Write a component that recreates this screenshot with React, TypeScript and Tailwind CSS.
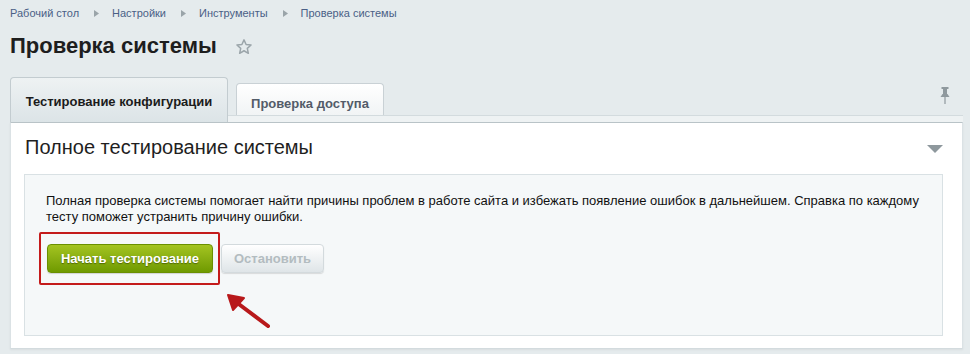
import React from "react";

const font = { fontFamily: '"Liberation Sans", Arial, sans-serif' };

function Crumb({ text, last }: { text: string; last?: boolean }) {
  return (
    <div className="flex items-center">
      <span className="text-[11px] leading-[16px] text-[#4a5f86]">{text}</span>
      {!last && (
        <svg width="5" height="7" viewBox="0 0 5 7" className="ml-[15px] mr-[13px]">
          <path d="M0 0 L5 3.5 L0 7 Z" fill="#9aa4a9" />
        </svg>
      )}
    </div>
  );
}

export default function App() {
  return (
    <div className="w-full h-[354px] bg-[#e5ebed] pl-[10px] pr-[7px] overflow-hidden" style={font}>
      <div className="flex items-center pt-[5px] h-[21px]">
        <Crumb text="Рабочий стол" />
        <Crumb text="Настройки" />
        <Crumb text="Инструменты" />
        <Crumb text="Проверка системы" last />
      </div>

      <div className="flex items-center mt-[12px] h-[26px]">
        <h1 className="text-[22px] leading-[26px] font-bold text-[#1e1e1e]">Проверка системы</h1>
        <svg width="18" height="18" viewBox="0 0 24 24" className="ml-[18px] mt-[2px]">
          <path
            d="M12 2.5 L14.8 8.6 L21.4 9.3 L16.4 13.8 L17.8 20.4 L12 17 L6.2 20.4 L7.6 13.8 L2.6 9.3 L9.2 8.6 Z"
            fill="none"
            stroke="#9ba5aa"
            strokeWidth="2"
            strokeLinejoin="round"
          />
        </svg>
      </div>

      <div className="mt-[18px] flex items-end">
        <div className="h-[45px] w-[218px] rounded-t-[4px] border border-b-0 border-[#c3ccd0] bg-gradient-to-b from-[#eef2f3] to-[#dce4e7] pt-[11px] text-center">
          <span className="text-[13px] leading-[16px] font-bold text-[#1b1b1b]">Тестирование конфигурации</span>
        </div>
        <div className="flex-1 flex flex-col">
          <div className="flex items-end justify-between">
            <div className="ml-[8px] h-[32px] w-[148px] rounded-t-[4px] border border-b-0 border-[#c9d1d5] bg-gradient-to-b from-[#ffffff] to-[#f1f4f5] pt-[7px] text-center">
              <span className="text-[13px] leading-[16px] font-bold text-[#535c69]">Проверка доступа</span>
            </div>
            <svg width="12" height="17" viewBox="0 0 12 17" className="mb-[11px] mr-[12px]">
              <rect x="2.5" y="0" width="7" height="2" fill="#8f999e" />
              <rect x="4" y="2" width="4" height="5" fill="#8f999e" />
              <path d="M1.5 10 L3.5 7 L8.5 7 L10.5 10 Z" fill="#8f999e" />
              <rect x="5.4" y="10" width="1.2" height="7" fill="#8f999e" />
            </svg>
          </div>
          <div className="h-[7px] border-t border-[#d3dbde] bg-[#eef2f3]" />
        </div>
      </div>

      <div className="border-t border-[#b9c3c7] bg-white border-x border-x-[#dbe2e5] border-b border-b-[#d3dbde] shadow-[0_1px_2px_rgba(0,0,0,0.06)] pl-[13px] pr-[19px] pt-[12px] pb-[12px]">
        <div className="flex items-center justify-between h-[24px]">
          <h2 className="pl-[1px] text-[20px] leading-[24px] text-[#1f1f1f]">Полное тестирование системы</h2>
          <svg width="16" height="8" viewBox="0 0 16 8" className="mt-[3px]">
            <path d="M0 0 L16 0 L8 8 Z" fill="#8e989d" />
          </svg>
        </div>

        <div className="relative mt-[15px] h-[162px] border border-[#d9e1e4] bg-[#f5f8f9] pl-[21px] pr-[22px] pt-[18px]">
          <p className="text-[13px] leading-[16px] text-[#111]">
            Полная проверка системы помогает найти причины проблем в работе сайта и избежать появление ошибок в дальнейшем. Справка по каждому тесту поможет устранить причину ошибки.
          </p>
          <div className="mt-[19px] flex items-center gap-[8px] pl-[1px]">
            <button className="h-[29px] w-[166px] rounded-[4px] border border-[#6a9000] bg-gradient-to-b from-[#a4c420] to-[#6f9a00] text-[13px] font-bold text-white [text-shadow:0_1px_1px_rgba(60,80,0,0.7)] shadow-[0_1px_1px_rgba(0,0,0,0.15)]">
              Начать тестирование
            </button>
            <button className="h-[29px] w-[103px] rounded-[4px] border border-[#d3dadd] bg-gradient-to-b from-[#ffffff] to-[#dfe5e8] text-[13px] font-bold text-[#b3bcc0] shadow-[0_1px_1px_rgba(0,0,0,0.12)]">
              Остановить
            </button>
          </div>

          <div className="absolute left-[14px] top-[57px] h-[53px] w-[181px] rounded-[2px] border-[2px] border-[#c41b1b]" />
          <svg
            className="absolute left-[197px] top-[116px]"
            width="52"
            height="42"
            viewBox="0 0 52 42"
          >
            <path d="M46 35 L14 11" stroke="#b8191b" strokeWidth="4" strokeLinecap="round" />
            <path d="M6 4 L22 7 L11 19 Z" fill="#b8191b" stroke="#b8191b" strokeWidth="2" strokeLinejoin="round" />
          </svg>
        </div>
      </div>
    </div>
  );
}
